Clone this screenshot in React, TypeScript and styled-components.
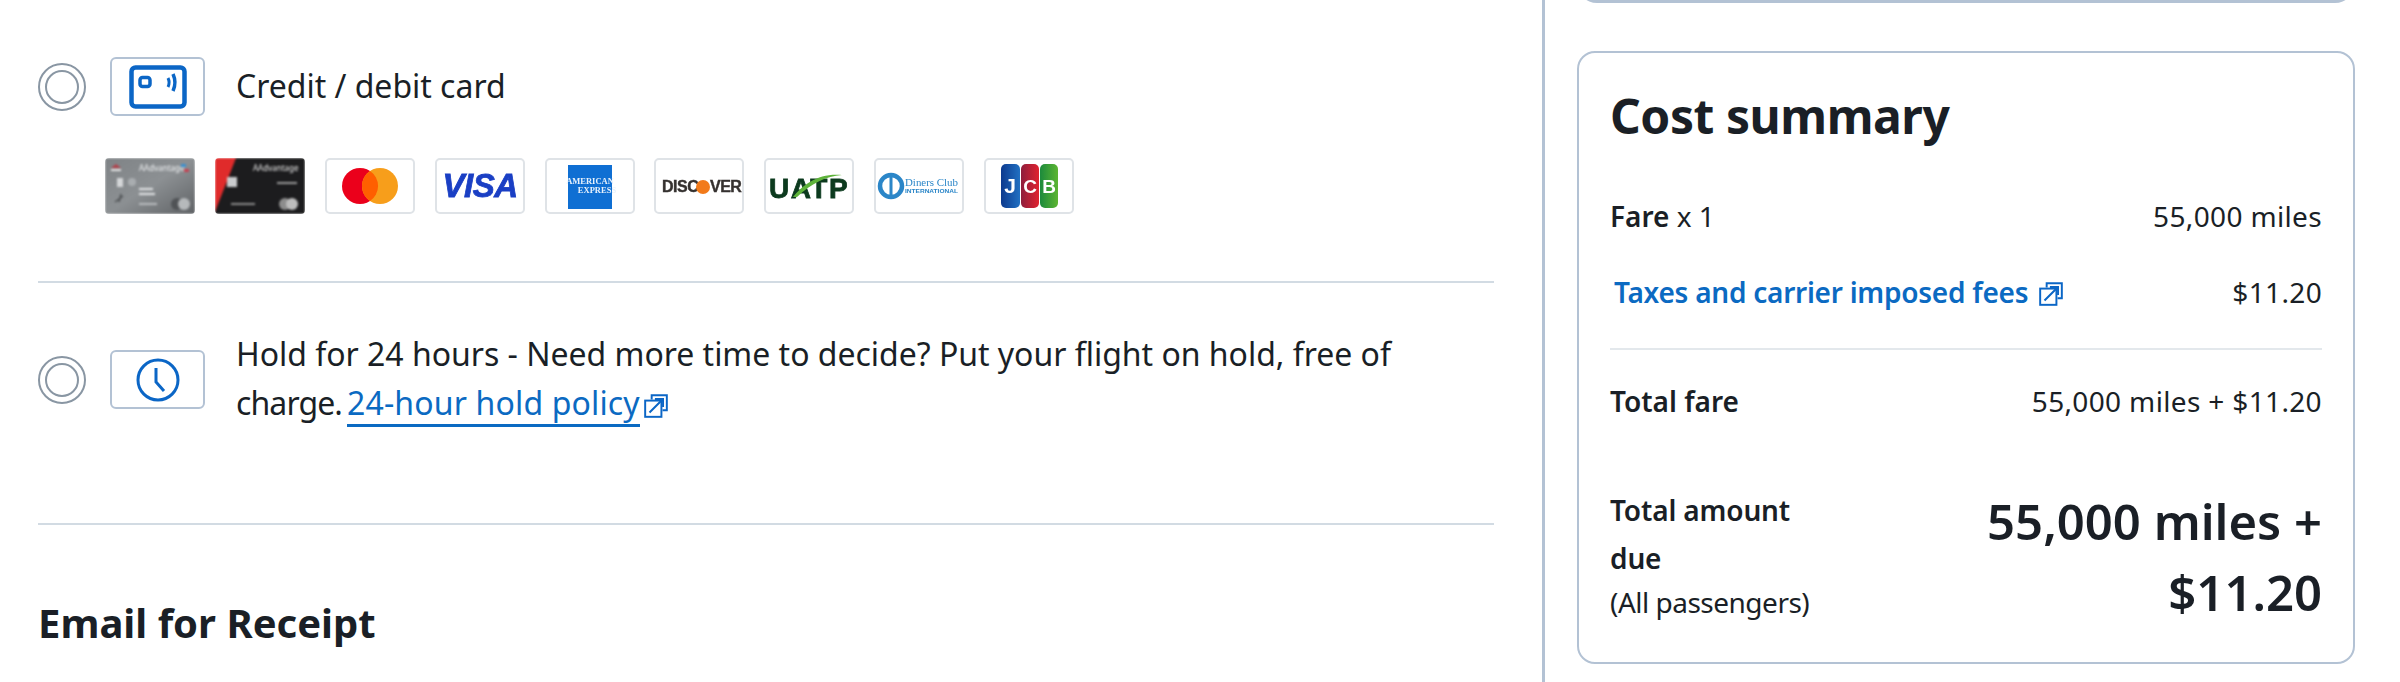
import React from "react";
import styled, { createGlobalStyle } from "styled-components";

const Global = createGlobalStyle`
  html, body { margin: 0; padding: 0; background: #fff; }
  body { font-family: "Noto Sans", "Open Sans", Arial, sans-serif; color: #1a1f26; }
`;

const Page = styled.div`
  display: flex;
  width: 2400px;
  height: 682px;
  overflow: hidden;
  background: #fff;
`;
const Main = styled.main`
  box-sizing: border-box;
  width: 1545px;
  padding: 57px 48px 0 38px;
  border-right: 3px solid #b3c2d4;
`;
const Aside = styled.aside`
  box-sizing: border-box;
  width: 855px;
  padding: 0 45px 0 32px;
`;
const OptionRow = styled.div`
  display: flex;
  align-items: center;
`;
const Radio = styled.span`
  box-sizing: border-box;
  flex: none;
  display: flex;
  align-items: center;
  justify-content: center;
  width: 48px;
  height: 48px;
  border-radius: 50%;
  border: 2px solid #8996a3;
  margin-right: 24px;
  &::after {
    content: "";
    box-sizing: border-box;
    width: 34px;
    height: 34px;
    border-radius: 50%;
    border: 2px solid #8996a3;
  }
`;
const IconBox = styled.span`
  box-sizing: border-box;
  flex: none;
  display: flex;
  align-items: center;
  justify-content: center;
  width: 95px;
  height: 59px;
  border: 2px solid #b3c2d4;
  border-radius: 6px;
  margin-right: 31px;
`;
const OptionText = styled.div`
  flex: 1;
  margin-top: -3px;
  font-size: 32px;
  line-height: 49px;
  color: #1a1f26;
  letter-spacing: -0.02px;
`;
const Tight = styled.span`
  letter-spacing: -0.9px;
`;
const PolicyLink = styled.a`
  color: #0b6ac2;
  border-bottom: 3px solid #0b6ac2;
  margin-left: 5px;
  padding-bottom: 0;
  letter-spacing: 0.15px;
`;
const InlineIcon = styled.svg`
  width: 26px;
  height: 26px;
  margin-left: 3px;
  vertical-align: -4px;
`;
const CardList = styled.div`
  display: flex;
  gap: 19.9px;
  margin: 42px 0 0 67px;
`;
const Tile = styled.div`
  box-sizing: border-box;
  flex: none;
  width: 90px;
  height: 56px;
  border: 2px solid #dfe3e7;
  border-radius: 5px;
  background: #fff;
  overflow: hidden;
  & > svg { display: block; width: 100%; height: 100%; filter: blur(0.6px); }
`;
const PhotoTile = styled(Tile)`
  border: none;
  border-radius: 4px;
  & > svg { filter: blur(0.9px); }
`;
const Divider = styled.hr<{ $top: number; $bottom: number }>`
  border: 0;
  height: 2px;
  background: #d2dbe3;
  margin: ${(p) => p.$top}px 0 ${(p) => p.$bottom}px;
`;
const SectionTitle = styled.h2`
  margin: 0;
  font-size: 40px;
  line-height: 48px;
  font-weight: 700;
  color: #1a1f26;
`;
const TopCardEdge = styled.div`
  box-sizing: border-box;
  height: 20px;
  margin-top: -17px;
  border: 3px solid #b3c2d4;
  border-top: 0;
  border-left-color: transparent;
  border-right-color: transparent;
  border-radius: 0 0 20px 20px;
  margin-bottom: 48px;
`;
const SummaryCard = styled.section`
  box-sizing: border-box;
  height: 613px;
  padding: 33px 31px 0;
  border: 2px solid #b3c2d4;
  border-radius: 18px;
`;
const SummaryTitle = styled.h2`
  margin: 0 0 50px;
  font-size: 48px;
  line-height: 60px;
  font-weight: 700;
  letter-spacing: -0.45px;
  color: #1a1f26;
`;
const Line = styled.div<{ $bottom?: number }>`
  display: flex;
  justify-content: space-between;
  align-items: center;
  font-size: 28px;
  line-height: 40px;
  margin-bottom: ${(p) => p.$bottom ?? 0}px;
`;
const Strong = styled.b`
  font-weight: 600;
`;
const Amount = styled.span`
  letter-spacing: 0.35px;
`;
const FeeLink = styled.a`
  color: #0b6ac2;
  font-weight: 600;
  margin-left: 4px;
  letter-spacing: -0.25px;
`;
const SummaryRule = styled.hr`
  border: 0;
  height: 2px;
  background: #e3e8ec;
  margin: 36px 0 31px;
`;
const TotalRow = styled.div`
  display: flex;
  justify-content: space-between;
  margin-top: 65px;
`;
const TotalLabel = styled.div`
  width: 190px;
  font-size: 28px;
  line-height: 48px;
  font-weight: 600;
  letter-spacing: -0.15px;
`;
const Passengers = styled.div`
  font-size: 28px;
  line-height: 40px;
  font-weight: 400;
  white-space: nowrap;
  letter-spacing: -0.5px;
`;
const TotalValue = styled.div`
  width: 400px;
  text-align: right;
  font-size: 49px;
  line-height: 71px;
  font-weight: 600;
`;

const BLUE = "#0b66c6";

const CardIcon = () => (
  <svg width="58" height="44" viewBox="0 0 58 44" fill="none">
    <rect x="2.500" y="2.500" width="53" height="39" rx="4" stroke={BLUE} strokeWidth="4.500" />
    <rect x="11" y="12.500" width="10" height="9" rx="2.500" stroke={BLUE} strokeWidth="3.500" />
    <path d="M39 13c1.500 3 1.500 6 0 9" stroke={BLUE} strokeWidth="3" />
    <path d="M44 9c2.500 5.500 2.500 11.500 0 17" stroke={BLUE} strokeWidth="3.500" />
  </svg>
);
const ClockIcon = () => (
  <svg width="46" height="46" viewBox="0 0 46 46" fill="none">
    <circle cx="23" cy="23" r="20" stroke={BLUE} strokeWidth="3" />
    <path d="M21 11v14l8 9" stroke={BLUE} strokeWidth="3" />
  </svg>
);
const ExternalIcon = () => (
  <InlineIcon viewBox="0 0 24 24" fill="none">
    <path d="M8 6V2h14v14h-4" stroke={BLUE} strokeWidth="1.800" />
    <rect x="2" y="7" width="15" height="15" stroke={BLUE} strokeWidth="1.800" />
    <path d="M6 18L18 6M11 5.500h7.500V13" stroke={BLUE} strokeWidth="1.800" />
  </InlineIcon>
);

const SilverCard = () => (
  <svg viewBox="0 0 90 56">
    <defs>
      <linearGradient id="silver" x1="0" y1="0" x2="1" y2="1">
        <stop offset="0" stopColor="#7f8386" />
        <stop offset="0.5" stopColor="#8c9093" />
        <stop offset="1" stopColor="#5f6265" />
      </linearGradient>
    </defs>
    <rect width="90" height="56" fill="url(#silver)" />
    <path d="M6 10l5-4 5 4z" fill="#b4404a" />
    <rect x="6" y="11" width="10" height="2" fill="#e6e6e6" />
    <text x="34" y="13" fontSize="8" fill="#f0f2f4" fontFamily="Noto Sans">AAdvantage</text>
    <rect x="76" y="6" width="5" height="3" fill="#3a8fd0" />
    <rect x="79" y="11" width="5" height="3" fill="#c64252" />
    <rect x="12" y="20" width="6" height="9" fill="#d4d6d8" />
    <circle cx="27" cy="24" r="4" fill="#a9adb0" />
    <rect x="34" y="30" width="14" height="2" fill="#e3e5e7" />
    <rect x="34" y="35" width="16" height="2" fill="#e3e5e7" />
    <rect x="34" y="45" width="18" height="2" fill="#b9bcbf" />
    <path d="M10 44l8-6M16 36l-2 8" stroke="#4f5255" strokeWidth="1.500" />
    <circle cx="72" cy="46" r="6" fill="#505356" />
    <circle cx="79" cy="46" r="6" fill="#b6b9bb" />
  </svg>
);
const BlackCard = () => (
  <svg viewBox="0 0 90 56">
    <rect width="90" height="56" fill="#1c1c1e" />
    <polygon points="0,0 21,0 0,54" fill="#e02b2b" />
    <rect x="12" y="19" width="10" height="10" fill="#c9cbcd" />
    <text x="38" y="13" fontSize="8" fill="#e8e8e8" fontFamily="Noto Sans">AAdvantage</text>
    <rect x="62" y="24" width="20" height="2" fill="#9a9a9a" />
    <rect x="16" y="45" width="24" height="2" fill="#8a8a8a" />
    <circle cx="70" cy="46" r="6" fill="#8d8d8d" />
    <circle cx="77" cy="46" r="6" fill="#bdbdbd" />
  </svg>
);
const Mastercard = () => (
  <svg viewBox="0 0 86 52">
    <circle cx="33" cy="26" r="18" fill="#eb001b" />
    <circle cx="53" cy="26" r="18" fill="#f79e1b" />
    <path d="M43 11a18 18 0 0 1 0 30a18 18 0 0 1 0-30z" fill="#ff5f00" />
  </svg>
);
const Visa = () => (
  <svg viewBox="0 0 86 52">
    <text x="43" y="37" textAnchor="middle" fontFamily="Liberation Sans" fontWeight="700" fontStyle="italic" fontSize="33" fill="#1a3fc4" stroke="#1a3fc4" strokeWidth="0.800" letterSpacing="-0.500">VISA</text>
  </svg>
);
const Amex = () => (
  <svg viewBox="0 0 86 52">
    <rect x="21" y="5" width="44" height="44" fill="#0f6fd3" />
    <text x="43" y="24" textAnchor="middle" fontFamily="Liberation Serif" fontWeight="700" fontSize="8.500" fill="#e7f1fb">AMERICAN</text>
    <text x="50" y="33" textAnchor="middle" fontFamily="Liberation Serif" fontWeight="700" fontSize="8.500" fill="#e7f1fb">EXPRESS</text>
  </svg>
);
const Discover = () => (
  <svg viewBox="0 0 86 52">
    <text x="6" y="32" fontFamily="Liberation Sans" fontWeight="700" fontSize="16" fill="#35312f" stroke="#35312f" strokeWidth="0.400" letterSpacing="-0.500">DISC</text>
    <circle cx="47" cy="27" r="7" fill="#f27a1a" />
    <text x="54" y="32" fontFamily="Liberation Sans" fontWeight="700" fontSize="16" fill="#35312f" stroke="#35312f" strokeWidth="0.400" letterSpacing="-0.500">VER</text>
  </svg>
);
const Uatp = () => (
  <svg viewBox="0 0 86 52">
    <text x="43" y="38" textAnchor="middle" fontFamily="Liberation Sans" fontWeight="700" fontSize="28" fill="#0c3a1e" stroke="#0c3a1e" strokeWidth="0.800" letterSpacing="1.500">UATP</text>
    <path d="M27 37C38 24 52 13 76 15C60 16 46 23 31 37z" fill="#5eb33a" />
  </svg>
);
const Diners = () => (
  <svg viewBox="0 0 86 52">
    <circle cx="15" cy="26" r="11" fill="none" stroke="#2b86c8" strokeWidth="4.500" />
    <rect x="13.500" y="17" width="3" height="18" fill="#2b86c8" />
    <text x="29" y="26" fontFamily="Liberation Serif" fontSize="11" textLength="53" lengthAdjust="spacingAndGlyphs" fill="#2b86c8">Diners Club</text>
    <text x="29" y="33" fontFamily="Liberation Sans" fontWeight="700" fontSize="5" textLength="53" lengthAdjust="spacingAndGlyphs" fill="#2b86c8">INTERNATIONAL</text>
  </svg>
);
const Jcb = () => (
  <svg viewBox="0 0 86 52">
    <defs>
      <linearGradient id="jcbJ" x1="0" y1="0" x2="1" y2="0"><stop offset="0" stopColor="#0d3a8e" /><stop offset="1" stopColor="#2170c2" /></linearGradient>
      <linearGradient id="jcbC" x1="0" y1="0" x2="1" y2="0"><stop offset="0" stopColor="#8e1d3c" /><stop offset="1" stopColor="#e0222f" /></linearGradient>
      <linearGradient id="jcbB" x1="0" y1="0" x2="1" y2="0"><stop offset="0" stopColor="#1c8a3c" /><stop offset="1" stopColor="#5cb531" /></linearGradient>
    </defs>
    <rect x="15" y="4" width="19" height="44" rx="5" fill="url(#jcbJ)" />
    <rect x="35" y="4" width="18" height="44" rx="5" fill="url(#jcbC)" />
    <rect x="54" y="4" width="18" height="44" rx="5" fill="url(#jcbB)" />
    <text x="24" y="33" textAnchor="middle" fontFamily="Liberation Sans" fontWeight="700" fontSize="21" fill="#fff">J</text>
    <text x="44" y="33" textAnchor="middle" fontFamily="Liberation Sans" fontWeight="700" fontSize="19" fill="#fff">C</text>
    <text x="63" y="33" textAnchor="middle" fontFamily="Liberation Sans" fontWeight="700" fontSize="19" fill="#fff">B</text>
  </svg>
);

export default function App() {
  return (
    <Page>
      <Global />
      <Main>
        <OptionRow>
          <Radio />
          <IconBox><CardIcon /></IconBox>
          <OptionText>Credit / debit card</OptionText>
        </OptionRow>
        <CardList>
          <PhotoTile><SilverCard /></PhotoTile>
          <PhotoTile><BlackCard /></PhotoTile>
          <Tile><Mastercard /></Tile>
          <Tile><Visa /></Tile>
          <Tile><Amex /></Tile>
          <Tile><Discover /></Tile>
          <Tile><Uatp /></Tile>
          <Tile><Diners /></Tile>
          <Tile><Jcb /></Tile>
        </CardList>
        <Divider $top={67} $bottom={49} />
        <OptionRow>
          <Radio />
          <IconBox><ClockIcon /></IconBox>
          <OptionText>
            Hold for 24 hours - Need more time to decide? Put your flight on hold, free of{" "}
            <Tight>charge.</Tight>
            <PolicyLink>24-hour hold policy</PolicyLink>
            <ExternalIcon />
          </OptionText>
        </OptionRow>
        <Divider $top={96} $bottom={74} />
        <SectionTitle>Email for Receipt</SectionTitle>
      </Main>
      <Aside>
        <TopCardEdge />
        <SummaryCard>
          <SummaryTitle>Cost summary</SummaryTitle>
          <Line $bottom={36}>
            <span><Strong>Fare</Strong> x 1</span>
            <Amount>55,000 miles</Amount>
          </Line>
          <Line>
            <FeeLink>Taxes and carrier imposed fees <ExternalIcon /></FeeLink>
            <Amount>$11.20</Amount>
          </Line>
          <SummaryRule />
          <Line>
            <Strong>Total fare</Strong>
            <Amount>55,000 miles + $11.20</Amount>
          </Line>
          <TotalRow>
            <TotalLabel>
              Total amount due
              <Passengers>(All passengers)</Passengers>
            </TotalLabel>
            <TotalValue>55,000 miles + $11.20</TotalValue>
          </TotalRow>
        </SummaryCard>
      </Aside>
    </Page>
  );
}
